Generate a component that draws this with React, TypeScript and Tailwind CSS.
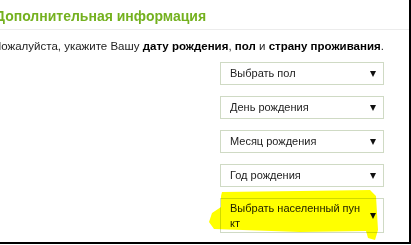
import React from "react";

const fields = ["Выбрать пол", "День рождения", "Месяц рождения", "Год рождения"];

const Arrow: React.FC = () => (
  <svg width="6" height="6" viewBox="0 0 6 6" className="shrink-0">
    <path d="M0 0 H6 L3 6 Z" fill="#111" />
  </svg>
);

const App: React.FC = () => {
  return (
    <div className="relative w-[411px] h-[245px] overflow-hidden bg-white">
      <div
        className="h-[244px] border-r-2 border-b-2 border-black"
        style={{ fontFamily: '"Liberation Sans", Arial, sans-serif' }}
      >
        {/* Header */}
        <div className="-ml-[5px] h-[30px] border-b border-[#ececec] pt-[6px]">
          <h2 className="whitespace-nowrap text-[14px] font-bold leading-[20px] text-[#74b11f]">
            Дополнительная информация
          </h2>
        </div>

        <p className="-ml-[7px] mt-[8px] whitespace-nowrap text-[11.5px] leading-[16px] text-[#222]">
          Пожалуйста, укажите Вашу <b className="text-black">дату рождения</b>,{" "}
          <b className="text-black">пол</b> и{" "}
          <b className="text-black">страну проживания</b>.
        </p>

        {/* Selects */}
        <div className="ml-[220px] mt-[8px] flex w-[164px] flex-col gap-[11px]">
          {fields.map((f) => (
            <div
              key={f}
              className="flex h-[23px] items-center justify-between border border-[#cfdac4] pl-[9px] pr-[7px] text-[11px] text-[#222]"
            >
              <span>{f}</span>
              <Arrow />
            </div>
          ))}
          <div className="flex h-[35px] items-center justify-between border border-[#cfdac4] pl-[9px] pr-[7px] text-[11px] leading-[15px] text-[#222]">
            <span className="whitespace-nowrap">
              Выбрать населенный пун
              <br />
              кт
            </span>
            <Arrow />
          </div>
        </div>
      </div>

      {/* Highlighter scribble */}
      <svg
        className="pointer-events-none absolute left-0 top-0 mix-blend-multiply"
        width="411"
        height="245"
      >
        <path
          d="M222 192 L300 191 L370 190 L376 196 L378 230 L375 240 L368 238 L366 231 L300 232 L214 229 L209 222 L212 213 L221 207 L221 196 Z"
          fill="#ffff00"
        />
      </svg>
    </div>
  );
};

export default App;
